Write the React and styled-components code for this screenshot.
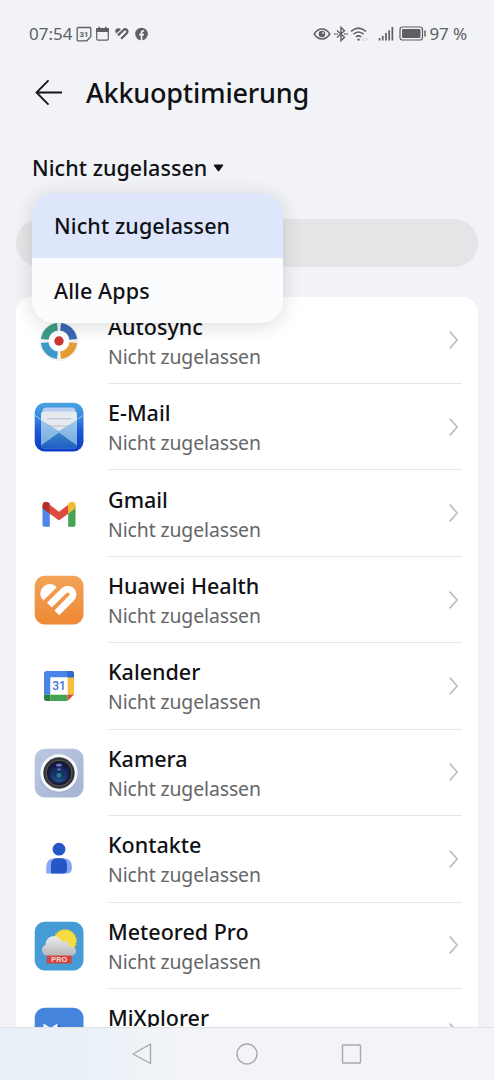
import React, { useState } from 'react';
import styled, { createGlobalStyle } from 'styled-components';

const GlobalStyle = createGlobalStyle`
  body {
    margin: 0;
    background: #f1f3f7;
  }
  * {
    box-sizing: border-box;
  }
`

const Screen = styled.div`
  position: relative;
  display: flex;
  flex-direction: column;
  width: 494px;
  height: 1080px;
  overflow: hidden;
  background: #f1f3f7;
  color: #101114;
  font-family: 'Noto Sans', 'Liberation Sans', sans-serif;
`

const StatusBar = styled.div`
  display: flex;
  align-items: center;
  justify-content: space-between;
  height: 66px;
  padding: 1px 27px 0 29px;
  color: #5f6063;
`

const StatusGroup = styled.div`
  display: flex;
  align-items: center;
`

const StatusText = styled.span`
  margin-left: ${({ $gap }) => $gap || 0}px;
  font-size: 17px;
  line-height: 20px;
  letter-spacing: ${({ $spacing }) => $spacing || '0'};
  white-space: pre;
`

const StatusIcon = styled.svg`
  display: block;
  flex: none;
  margin-left: ${({ $gap }) => $gap || 0}px;
`

const Header = styled.header`
  display: flex;
  align-items: center;
  height: 53px;
  padding: 0 0 0 35px;
`

const BackButton = styled.button`
  display: flex;
  width: 28px;
  height: 28px;
  padding: 0;
  margin-right: 23px;
  border: 0;
  background: none;
`

const Title = styled.h1`
  margin: 0;
  font-size: 27px;
  font-weight: 460;
  line-height: 34px;
  letter-spacing: -0.2px;
`

const Filter = styled.button`
  display: flex;
  align-items: center;
  height: 100px;
  padding: 0 0 3px 32px;
  border: 0;
  background: none;
  color: inherit;
  font: 460 21.5px/28px 'Noto Sans', sans-serif;
  letter-spacing: 0.05px;
`

const Caret = styled.svg`
  margin-left: 6px;
`

const Search = styled.div`
  flex: none;
  height: 48px;
  margin: 0 16px 30px;
  border-radius: 24px;
  background: #e4e5e7;
`

const Card = styled.div`
  flex: 1;
  min-height: 0;
  margin: 0 16px;
  padding-top: 0.5px;
  overflow: hidden;
  border-radius: 16px 16px 0 0;
  background: #fff;
`

const Row = styled.div`
  display: flex;
  align-items: center;
  height: 86.44px;
  padding: 0 16px 0 18px;
`

const RowIcon = styled.svg`
  display: block;
  flex: none;
  width: 50px;
  height: 50px;
`

const RowBody = styled.div`
  display: flex;
  flex: 1;
  align-items: center;
  justify-content: space-between;
  height: 100%;
  margin-left: 24px;
  padding-right: 3px;
  border-bottom: 1px solid #e5e6e8;
`

const Labels = styled.div`
  padding-top: 3px;
`

const Name = styled.div`
  font-size: 21.5px;
  font-weight: 460;
  line-height: 30px;
`

const State = styled.div`
  color: #65666a;
  font-size: 19.4px;
  line-height: 30px;
  letter-spacing: -0.1px;
`

const Menu = styled.div`
  position: absolute;
  top: 193px;
  left: 32px;
  width: 250.5px;
  overflow: hidden;
  border-radius: 22px;
  background: #fbfcfe;
  box-shadow: 0 3px 20px rgba(0, 0, 0, 0.14);
`

const MenuItem = styled.div`
  height: 65px;
  padding-left: 22px;
  background: ${({ $active }) => ($active ? '#dde6fb' : 'transparent')};
  font-size: 21.5px;
  font-weight: 460;
  line-height: 66px;
  letter-spacing: 0.1px;
`

const NavBar = styled.nav`
  display: flex;
  flex: none;
  align-items: center;
  justify-content: center;
  gap: 80px;
  height: 53px;
  border-top: 1px solid #e0e2e5;
  background: linear-gradient(90deg, #e8eff7 0, #e9f1f7 80px, #f2f4f8 180px);
`

const Chevron = () => (
  <svg width="10" height="18" viewBox="0 0 10 18" fill="none">
    <path d="M1.200 1.200 8.200 9l-7 7.800" stroke="#bebfc1" strokeWidth="1.800" strokeLinecap="round" strokeLinejoin="round" />
  </svg>
)

const AutosyncIcon = () => (
  <RowIcon viewBox="0 0 50 50">
    <circle cx="25" cy="25.500" r="19.500" fill="#f1f2f4" />
    <g fill="none" strokeWidth="7.500">
      <path d="M10.700 23.400A14.300 14.300 0 0 1 23.400 10.700" stroke="#3c9c86" />
      <path d="M26.600 10.700A14.300 14.300 0 0 1 39.300 23.400" stroke="#3c66b4" />
      <path d="M39.300 26.600A14.300 14.300 0 0 1 26.600 39.300" stroke="#e79c33" />
      <path d="M23.400 39.300A14.300 14.300 0 0 1 10.700 26.600" stroke="#3c98c6" />
    </g>
    <circle cx="25" cy="25" r="10" fill="#fff" />
    <circle cx="25" cy="25" r="4.700" fill="#cb3632" />
  </RowIcon>
)

const MailIcon = () => (
  <RowIcon viewBox="0 0 50 50">
    <defs>
      <linearGradient id="mailBg" x1="0" y1="0" x2="0" y2="1">
        <stop offset="0" stopColor="#4aa3e2" />
        <stop offset=".3" stopColor="#3487dd" />
        <stop offset=".6" stopColor="#1a55d6" />
        <stop offset="1" stopColor="#0f3cc4" />
      </linearGradient>
      <linearGradient id="mailFlap" x1="0" y1="0" x2="0" y2="1">
        <stop offset="0" stopColor="#3a82c4" />
        <stop offset="1" stopColor="#1f5fc6" />
      </linearGradient>
      <linearGradient id="mailSide" x1="0" y1="0" x2="0" y2="1">
        <stop offset="0" stopColor="#a3cbec" />
        <stop offset="1" stopColor="#6fa9dc" />
      </linearGradient>
    </defs>
    <rect x=".700" y=".700" width="48.800" height="48.800" rx="10" fill="url(#mailBg)" />
    <path d="M8.500 9q0-3.500 3.500-3.500h26q3.500 0 3.500 3.500v5h-33z" fill="#b9cdf2" />
    <path d="M7 15v28q0 3.500 3.500 3.500h29q3.500 0 3.500-3.500V15z" fill="url(#mailSide)" />
    <path d="M7 12q0-2.500 2.500-2.500h31Q43 9.500 43 12v6L25 29 7 18z" fill="#e6e9ee" />
    <path d="M13 16.800h24M13 24h24" stroke="#aab4bd" strokeWidth=".800" />
    <path d="M7 43.500 25 30.500 43 43.500q0 3-3.500 3h-29q-3.500 0-3.500-3z" fill="url(#mailFlap)" />
    <path d="M1 13.500 7 17.500M49 13.500l-6 4" stroke="#8dc5f0" strokeWidth="1" />
  </RowIcon>
)

const GmailIcon = () => (
  <RowIcon viewBox="0 0 50 50">
    <g transform="translate(0 -1.500)">
      <path d="M8.500 18v19.500q0 1.700 1.700 1.700h5.600V23z" fill="#4f86ec" />
      <path d="M41.500 18v19.500q0 1.700-1.700 1.700h-5.600V23z" fill="#42a454" />
      <path d="M15.500 17 25 24.300 34.500 17v9L25 33l-9.500-7z" fill="#dc4b3e" />
      <path d="M8.500 17.500c0-3.400 3.700-4.200 6-2.500l1.300 1v10.200l-7.300-5.500z" fill="#b92b26" />
      <path d="M41.500 17.500c0-3.400-3.700-4.200-6-2.500l-1.300 1v10.200l7.300-5.500z" fill="#f3bb2f" />
    </g>
  </RowIcon>
)

const HealthIcon = () => (
  <RowIcon viewBox="0 0 50 50">
    <defs>
      <linearGradient id="healthBg" x1="0" y1="0" x2="0" y2="1">
        <stop offset="0" stopColor="#f2a457" />
        <stop offset="1" stopColor="#ee8836" />
      </linearGradient>
    </defs>
    <rect x=".700" y=".700" width="48.800" height="48.800" rx="10" fill="url(#healthBg)" />
    <path d="M22.300 12.200 9.400 24.900A8.900 8.900 0 0 1 22.300 12.200z" fill="#fff" stroke="#fff" strokeWidth="1" strokeLinejoin="round" />
    <path d="M15.400 30.100 30 15.600A5.200 5.200 0 0 1 37.500 23L22.800 37.900" fill="none" stroke="#fff" strokeWidth="6.800" />
  </RowIcon>
)

const CalendarIcon = () => (
  <RowIcon viewBox="0 0 50 50">
    <path d="M10 12.500Q10 10 12.500 10h25q2.500 0 2.500 2.500V16.500H16.500V33.500H10z" fill="#4a84e8" />
    <path d="M33.500 16.500H40v17h-6.500z" fill="#f5be3c" />
    <path d="M33.500 10h4q2.500 0 2.500 2.500v4h-6.500z" fill="#3567c8" />
    <path d="M10 33.500h6.500v6.500h-4Q10 40 10 37.500z" fill="#2f7d41" />
    <path d="M16.500 33.500h17V40h-17z" fill="#45a253" />
    <path d="M33.500 33.500H40L33.500 40z" fill="#d84a3a" />
    <path d="M16.500 16.500h17v17h-17z" fill="#fff" />
    <text x="25" y="29.300" textAnchor="middle" fontFamily="Roboto" fontWeight="500" fontSize="12" fill="#3f72d3">31</text>
  </RowIcon>
)

const CameraIcon = () => (
  <RowIcon viewBox="0 0 50 50">
    <defs>
      <linearGradient id="camBg" x1="0" y1="0" x2="1" y2="1">
        <stop offset="0" stopColor="#bcc8e2" />
        <stop offset="1" stopColor="#a6b3d3" />
      </linearGradient>
      <radialGradient id="lens" cx=".5" cy=".7" r=".6">
        <stop offset="0" stopColor="#2f7197" />
        <stop offset=".5" stopColor="#1b3779" />
        <stop offset="1" stopColor="#121a45" />
      </radialGradient>
    </defs>
    <rect x=".700" y=".700" width="48.800" height="48.800" rx="10" fill="url(#camBg)" />
    <circle cx="25" cy="26" r="19" fill="#8e9bbd" opacity=".5" />
    <circle cx="25" cy="25" r="18.700" fill="#f7f8fb" />
    <circle cx="25" cy="25" r="15.700" fill="#35363b" />
    <circle cx="25" cy="25" r="13.300" fill="#55565a" />
    <circle cx="25" cy="25" r="12.200" fill="#191b2a" />
    <circle cx="25" cy="25" r="10.200" fill="url(#lens)" />
    <circle cx="25" cy="26" r="5.200" fill="#14355f" />
    <circle cx="25" cy="27.500" r="2.500" fill="#2e7791" />
    <ellipse cx="25" cy="17.200" rx="3" ry="1.400" fill="#6f7bcf" />
    <ellipse cx="25" cy="21.500" rx="1.700" ry="1" fill="#7585c8" />
  </RowIcon>
)

const ContactsIcon = () => (
  <RowIcon viewBox="0 0 50 50">
    <circle cx="25" cy="15.200" r="6.400" fill="#2556c5" />
    <path d="M12.300 39.500V33q0-8.800 8.700-8.800h8q9 0 9 9 0 6.300-5 6.300z" fill="#86a5f4" />
    <path d="M17 39.500V31q0-6.800 6-6.800h4q6 0 6 6.800v4q0 4.500-4 4.500z" fill="#2556c5" />
  </RowIcon>
)

const WeatherIcon = () => (
  <RowIcon viewBox="0 0 50 50">
    <defs>
      <linearGradient id="cloud" x1="0" y1="0" x2="0" y2="1">
        <stop offset="0" stopColor="#ececed" />
        <stop offset="1" stopColor="#b5b6b9" />
      </linearGradient>
    </defs>
    <rect x=".700" y=".700" width="48.800" height="48.800" rx="10" fill="#459cd6" />
    <circle cx="31" cy="20" r="11" fill="#f4e04a" stroke="#f0c535" strokeWidth="2" strokeDasharray="1.500 1.200" />
    <circle cx="31" cy="20" r="10.700" fill="#f5dd3f" />
    <path d="M14 35C6.500 35 6.500 25 11.500 24c0-6.500 5-9.500 9.500-8.700 4 .700 6 3.500 6.500 5.500 4-1.500 8 .700 8.500 4.700 8 0 8 9.500.500 9.500z" fill="url(#cloud)" />
    <rect x="12.700" y="34.500" width="25" height="8" rx="1" fill="#d4443f" />
    <text x="25.200" y="41.200" textAnchor="middle" fontFamily="Liberation Sans" fontWeight="700" fontSize="7.300" fill="#f7dcd8">PRO</text>
  </RowIcon>
)

const MixIcon = () => (
  <RowIcon viewBox="0 0 50 50">
    <rect x=".700" y=".700" width="48.800" height="48.800" rx="10" fill="#4484dd" />
    <path d="M9.500 34V16.500l7.200 4.500 7-4.500V34z" fill="#fff" />
    <path d="m23.700 16.500 3 3.500v5h-3z" fill="#2f66bd" />
  </RowIcon>
)

const apps = [
  { name: 'Autosync', Icon: AutosyncIcon },
  { name: 'E-Mail', Icon: MailIcon },
  { name: 'Gmail', Icon: GmailIcon },
  { name: 'Huawei Health', Icon: HealthIcon },
  { name: 'Kalender', Icon: CalendarIcon },
  { name: 'Kamera', Icon: CameraIcon },
  { name: 'Kontakte', Icon: ContactsIcon },
  { name: 'Meteored Pro', Icon: WeatherIcon },
  { name: 'MiXplorer', Icon: MixIcon },
]

const options = ['Nicht zugelassen', 'Alle Apps']

const App = () => {
  const [filter, setFilter] = useState(options[0])

  return (
    <Screen>
      <GlobalStyle />
      <StatusBar>
        <StatusGroup>
          <StatusText>07:54</StatusText>
          <StatusIcon $gap={4} width="16" height="16" viewBox="0 0 16 16">
            <path d="M2 1.500h12q.800 0 .800.800v8.500l-4 4H2q-.800 0-.800-.800V2.300q0-.800.800-.800z" fill="none" stroke="currentColor" strokeWidth="1.300" />
            <text x="8" y="11" textAnchor="middle" fontFamily="Roboto" fontWeight="700" fontSize="8" fill="currentColor">31</text>
          </StatusIcon>
          <StatusIcon $gap={3} width="15" height="16" viewBox="0 0 15 16">
            <path d="M1.700 2.500h11.600v10.300q0 1.400-1.400 1.400H3.100q-1.400 0-1.400-1.400z" fill="none" stroke="currentColor" strokeWidth="1.200" />
            <path d="M1.200 6V3.500q0-1.500 1.500-1.500h.8V.8h1.500V2h5V.8h1.500V2h.8q1.500 0 1.500 1.500V6z" fill="currentColor" />
          </StatusIcon>
          <StatusIcon $gap={4} width="16" height="16" viewBox="0 0 16 16">
            <path d="M7 3.200 2.400 7.600C.200 5.500 1.400 2.300 4.200 2.300q1.700 0 2.800.900z" fill="currentColor" />
            <path d="M4 9.400 9.300 4.200" stroke="currentColor" strokeWidth="2.200" />
            <path d="m9.300 4.200c2.500-2.300 5.700.600 3.400 3L7.200 12.700" fill="none" stroke="currentColor" strokeWidth="2.200" />
          </StatusIcon>
          <StatusIcon $gap={5} width="13" height="14" viewBox="0 0 13 14">
            <circle cx="6.500" cy="7" r="6.300" fill="currentColor" />
            <path d="M5.700 14V8.600H4.100V6.700h1.600V5.400q0-2.200 2.100-2.200h1.300v1.600h-.9q-.8 0-.8.800v1.100h1.700l-.3 1.900H7.400V14z" fill="#f1f3f7" />
          </StatusIcon>
        </StatusGroup>
        <StatusGroup>
          <StatusIcon width="18" height="14" viewBox="0 0 18 14">
            <path d="M1.200 7Q4.500 2 9 2t7.800 5Q13.500 12 9 12T1.200 7z" fill="none" stroke="currentColor" strokeWidth="1.500" />
            <circle cx="9" cy="7" r="3.300" fill="currentColor" />
            <circle cx="10" cy="5.900" r="1" fill="#d5d6d9" />
          </StatusIcon>
          <StatusIcon $gap={3} width="14" height="16" viewBox="0 0 14 16" fill="none" stroke="currentColor" strokeWidth="1.400">
            <path d="m3 4.500 7.500 6.700L7 14.700V1.300l3.500 3.500L3 11.500" />
            <path d="M1 7.200v1.600M3.200 7.200v1.600M10.800 7.200v1.600M13 7.200v1.600" strokeWidth="1.400" />
          </StatusIcon>
          <StatusIcon $gap={2} width="18" height="16" viewBox="0 0 18 16" fill="none" stroke="currentColor" strokeWidth="1.500">
            <path d="M1 5.400q7.500-6.600 15 0M3.300 8.300q5.200-4.600 10.400 0M5.800 11q2.700-2.300 5.400 0" />
            <circle cx="8.500" cy="13.600" r="1.200" fill="currentColor" stroke="none" />
            <path d="m13.700 12-1.200 1.400 1.200 1.400M15.800 12l1.200 1.400-1.200 1.400" stroke="#b3b4b8" strokeWidth=".8" />
          </StatusIcon>
          <StatusIcon $gap={10} width="16" height="15" viewBox="0 0 16 15" fill="currentColor">
            <path d="M.7 12h1.700v2.500H.7zM3.900 9.700h1.700v4.800H3.900zM7.100 7h1.700v7.500H7.100zM10.300 4.300H12v10.200h-1.700zM13.500 1h1.700v13.500h-1.700z" />
          </StatusIcon>
          <StatusIcon $gap={5} width="28" height="15" viewBox="0 0 28 15">
            <rect x="1" y="1" width="22.500" height="13" rx="2.500" fill="none" stroke="currentColor" strokeWidth="1.200" />
            <rect x="3" y="3" width="18.500" height="9" rx="1" fill="currentColor" />
            <path d="M26 4.500v6" stroke="currentColor" strokeWidth="1.500" />
          </StatusIcon>
          <StatusText $gap={2} $spacing="-0.1px">97 %</StatusText>
        </StatusGroup>
      </StatusBar>

      <Header>
        <BackButton aria-label="Zurück">
          <svg width="28" height="28" viewBox="0 0 28 28" fill="none" stroke="#15161a" strokeWidth="1.800">
            <path d="M27 13.500H1.800M13.500 1.300 1.500 13.500l12 12.200" />
          </svg>
        </BackButton>
        <Title>Akkuoptimierung</Title>
      </Header>

      <Filter>
        {filter}
        <Caret width="11" height="8" viewBox="0 0 11 8">
          <path d="M1.500.5h8q1.200.3.500 1.300L6.200 7q-.7.800-1.400 0L1 1.800Q.3.800 1.500.5z" fill="#101114" />
        </Caret>
      </Filter>

      <Search />

      <Card>
        {apps.map(({ name, Icon }) => (
          <Row key={name}>
            <Icon />
            <RowBody>
              <Labels>
                <Name>{name}</Name>
                <State>Nicht zugelassen</State>
              </Labels>
              <Chevron />
            </RowBody>
          </Row>
        ))}
      </Card>

      <NavBar>
        <svg width="24" height="24" viewBox="0 0 24 24" fill="none" stroke="#a8a9ad" strokeWidth="1.400" strokeLinejoin="round">
          <path d="M19.500 2v19.500L2 12z" />
        </svg>
        <svg width="24" height="24" viewBox="0 0 24 24" fill="none" stroke="#a8a9ad" strokeWidth="1.400">
          <circle cx="12" cy="12" r="10" />
        </svg>
        <svg width="24" height="24" viewBox="0 0 24 24" fill="none" stroke="#a8a9ad" strokeWidth="1.400">
          <rect x="3.500" y="3" width="18" height="18" rx=".8" />
        </svg>
      </NavBar>

      <Menu>
        {options.map((option) => (
          <MenuItem key={option} $active={option === filter} onClick={() => setFilter(option)}>
            {option}
          </MenuItem>
        ))}
      </Menu>
    </Screen>
  )
}

export default App;
